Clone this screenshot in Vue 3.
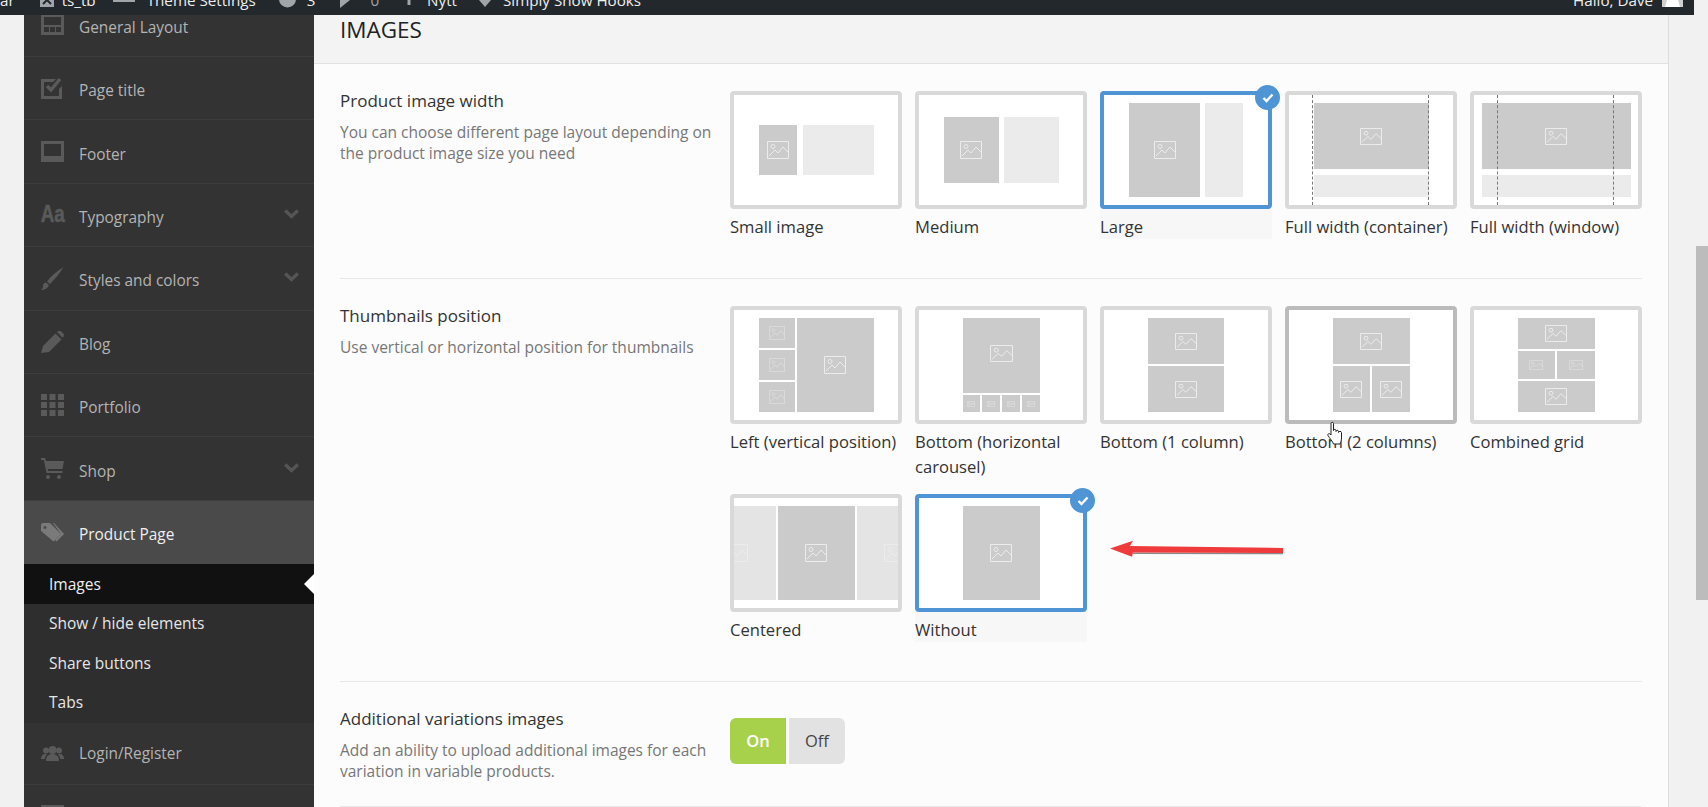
<template>
  <div class="page">
    <header class="adminbar">
      <span class="ab-text ab-first">ar</span>
      <svg class="ab-icon ab-site" width="14" height="14" viewBox="0 0 14 14"><path d="M0 0h14v14H0z" /><path d="M3 3l8 8M11 3l-8 8" stroke="#23282d" stroke-width="2" /></svg>
      <span class="ab-text ab-site-name">ts_tb</span>
      <svg class="ab-icon ab-theme" width="22" height="8" viewBox="0 0 22 8"><path d="M0 0h22v6H0z" /></svg>
      <span class="ab-text ab-theme-name">Theme Settings</span>
      <svg class="ab-icon ab-update" width="17" height="8" viewBox="0 0 17 8"><circle cx="8.5" cy="-1" r="8.5" /></svg>
      <span class="ab-text ab-count">3</span>
      <svg class="ab-icon ab-comment" width="10" height="8" viewBox="0 0 10 8"><path d="M0 0h10L0 8z" /></svg>
      <span class="ab-text ab-zero">0</span>
      <svg class="ab-icon ab-plus" width="8" height="8" viewBox="0 0 8 8"><path d="M2.5 0h3v5h-3z" /></svg>
      <span class="ab-text ab-new">Nytt</span>
      <svg class="ab-icon ab-hooks" width="12" height="8" viewBox="0 0 12 8"><path d="M0 0h12L6 7z" /></svg>
      <span class="ab-text ab-hooks-name">Simply Show Hooks</span>
      <span class="ab-text ab-hello">Hallo, Dave</span>
      <svg class="ab-avatar" width="21" height="7" viewBox="0 0 21 7"><path fill="#cfcfcf" d="M0 0h21v7H0z" /><path fill="#fff" d="M5 0h11l2 7H3z" /></svg>
    </header>

    <div class="layout">
      <nav class="sidebar">
        <div class="menu">
          <template v-for="item in menu" :key="item.icon">
            <div class="menu-item" :class="{ active: item.active, short: item.short }">
              <span class="menu-icon">
                <svg v-if="item.icon === 'layout'" width="23" height="21" viewBox="0 0 23 21"><path fill-rule="evenodd" d="M0 0h23v21H0zM3 3v8h17V3zM3 13v5h5v-5zM9 13v5h5v-5zM15 13v5h5v-5z" /></svg>
                <svg v-else-if="item.icon === 'title'" width="23" height="22" viewBox="0 0 23 22"><path d="M0 2h15l-3 3H3v14h15v-7l3-3v13H0z" /><path d="M6 9l4 4 9-11" fill="none" stroke="currentColor" stroke-width="3.4" /></svg>
                <svg v-else-if="item.icon === 'footer'" width="23" height="21" viewBox="0 0 23 21"><path fill-rule="evenodd" d="M0 0h23v21H0zM3 3v12h17V3z" /></svg>
                <span v-else-if="item.icon === 'type'" class="aa">Aa</span>
                <svg v-else-if="item.icon === 'brush'" width="23" height="23" viewBox="0 0 23 23"><path d="M22.5 0C19 6 14 12 9 17l-3-2.500C10 9 16 4 22.500 0z" /><path d="M5 15.500l3 2.500c-1 3-4 5-8 5 2-1 2-3 2-4 0-2 1.500-3.500 3-3.500z" /></svg>
                <svg v-else-if="item.icon === 'pencil'" width="23" height="22" viewBox="0 0 23 22"><path d="M0 22l2-7L14.500 2.500l6 6L8 21z" /><path d="M16 1l1-.7c1-.5 2-.5 3 0l2.500 2.500c.5 1 .5 2 0 3l-1 1z" /></svg>
                <svg v-else-if="item.icon === 'grid'" width="23" height="22" viewBox="0 0 23 22"><path d="M0 0h6v6H0zM8.500 0h6v6h-6zM17 0h6v6h-6zM0 8h6v6H0zM8.500 8h6v6h-6zM17 8h6v6h-6zM0 16h6v6H0zM8.500 16h6v6h-6zM17 16h6v6h-6z" /></svg>
                <svg v-else-if="item.icon === 'cart'" width="23" height="21" viewBox="0 0 23 21"><path d="M0 0h4l1 3h18l-1.500 8H6.800l.4 2h14.300v2H5.500L2.800 2H0z" /><circle cx="7" cy="19" r="2" /><circle cx="18" cy="19" r="2" /></svg>
                <svg v-else-if="item.icon === 'tags'" width="23" height="19" viewBox="0 0 23 19"><path fill-rule="evenodd" d="M0 2C0 1 1 0 2 0h7l11 11-7.500 7.500L0 8zM4 3a1.500 1.500 0 1 0 .01 0z" /><path d="M12 0h1l10 11-7.500 7.500-1.500-1.500 6-6z" /></svg>
                <svg v-else-if="item.icon === 'group'" width="23" height="15" viewBox="0 0 23 15"><circle cx="11.500" cy="4" r="4" /><path d="M5 15c0-5 2.500-7 6.500-7s6.500 2 6.500 7z" /><circle cx="5" cy="4.500" r="3" /><circle cx="18" cy="4.500" r="3" /><path d="M0 13c0-3 1.500-5 4.500-5 .8 0 1 .2 1.300.4C4.500 10 3.800 11.500 3.700 13zM23 13c0-3-1.500-5-4.500-5-.8 0-1 .2-1.300.4 1.300 1.600 2 3.100 2.100 4.600z" /></svg>
                <svg v-else width="23" height="21" viewBox="0 0 23 21"><path d="M0 0h23v21H0z" /></svg>
              </span>
              <span class="menu-label">{{ item.label }}</span>
              <svg v-if="item.arrow" class="chevron" width="15" height="10" viewBox="0 0 15 10"><path d="M1.200 1.500l6.300 6 6.300-6" fill="none" stroke="currentColor" stroke-width="3.400" /></svg>
            </div>
            <ul v-if="item.active" class="submenu">
              <li v-for="sub in submenu" :key="sub" :class="{ current: sub === 'Images' }">{{ sub }}</li>
            </ul>
          </template>
        </div>
      </nav>

      <main class="panel">
        <div class="panel-head">
          <h2>IMAGES</h2>
        </div>
        <section v-for="row in sections" :key="row.title" class="row">
          <div class="row-info">
            <h3>{{ row.title }}</h3>
            <p>{{ row.desc }}</p>
          </div>
          <div class="options">
            <div v-for="opt in row.options" :key="opt.label" class="option" :class="{ selected: opt.selected }">
              <div class="card" :class="{ hovered: opt.hovered }">
                <div class="thumb" :style="{ gridTemplateColumns: opt.cols, gridTemplateRows: opt.rows, gap: opt.gap || '2px' }">
                  <div
                    v-for="(cell, i) in opt.cells"
                    :key="i"
                    class="cell"
                    :class="{ light: cell.light, pale: cell.pale, up: cell.up }"
                    :style="{ gridArea: cell.area }"
                  >
                    <svg v-if="cell.pic" class="pic" :class="{ faint: cell.pic[0] < 20 }" :width="cell.pic[0]" :height="cell.pic[1]" viewBox="0 0 22 18" preserveAspectRatio="none">
                      <rect x="0.500" y="0.500" width="21" height="17" vector-effect="non-scaling-stroke" />
                      <circle cx="6" cy="5.500" r="2" vector-effect="non-scaling-stroke" />
                      <path d="M2 15l6-6 3 3 5-6 5 5" vector-effect="non-scaling-stroke" />
                    </svg>
                  </div>
                </div>
                <template v-if="opt.dashed">
                  <i class="dash dash-left"></i>
                  <i class="dash dash-right"></i>
                </template>
              </div>
              <span v-if="opt.selected" class="badge">
                <svg width="12" height="10" viewBox="0 0 12 10"><path d="M1.500 5l3 3 6-6.500" fill="none" stroke="#fff" stroke-width="2.400" /></svg>
              </span>
              <div class="option-label">{{ opt.label }}</div>
              <svg v-if="opt.hovered" class="hand" width="16" height="24" viewBox="0 0 16 24">
                <path d="M4 2.500C4 1 6.500 1 6.500 2.500v7c0-1.500 2.500-1.500 2.500 0v1c0-1.500 2.500-1.500 2.500 0v1c0-1.500 3-1.500 3 0V17c0 3-1 4-1.500 6H6.500C6 21 2.500 17 1 14.500.3 13 2 12 3.200 13l.8 1z" fill="#fff" stroke="#222" stroke-width="1" />
              </svg>
            </div>
            <svg v-if="row.arrow" class="arrow" width="176" height="22" viewBox="0 0 176 22">
              <path d="M24 14.500l150 .5v1.200L24 16z" fill="#8a8a8a" />
              <path d="M1 10.500L24 2.700 21 8l153 2v5L24 14.500l-1 4.200z" fill="#ef3b3b" />
            </svg>
          </div>
        </section>
        <section class="row row-toggle">
          <div class="row-info">
            <h3>Additional variations images</h3>
            <p>Add an ability to upload additional images for each variation in variable products.</p>
          </div>
          <div class="toggle">
            <span class="toggle-on">On</span>
            <span class="toggle-off">Off</span>
          </div>
        </section>
      </main>

      <div class="gutter"></div>
      <div class="scrollbar"><div class="scroll-thumb"></div></div>
    </div>
  </div>
</template>

<script setup>
const menu = [
  { label: 'General Layout', icon: 'layout' },
  { label: 'Page title', icon: 'title' },
  { label: 'Footer', icon: 'footer' },
  { label: 'Typography', icon: 'type', arrow: true },
  { label: 'Styles and colors', icon: 'brush', arrow: true },
  { label: 'Blog', icon: 'pencil' },
  { label: 'Portfolio', icon: 'grid' },
  { label: 'Shop', icon: 'cart', arrow: true },
  { label: 'Product Page', icon: 'tags', active: true },
  { label: 'Login/Register', icon: 'group', short: true },
  { label: '', icon: 'box' }
]

const submenu = ['Images', 'Show / hide elements', 'Share buttons', 'Tabs']

const big = [22, 18]
const mid = [22, 17]

const sections = [
  {
    title: 'Product image width',
    desc: 'You can choose different page layout depending on the product image size you need',
    options: [
      {
        label: 'Small image',
        cols: '38px 71px',
        rows: '50px',
        gap: '6px',
        cells: [{ area: '1/1', pic: big }, { area: '1/2', light: true }]
      },
      {
        label: 'Medium',
        cols: '55px 55px',
        rows: '66px',
        gap: '5px',
        cells: [{ area: '1/1', pic: big }, { area: '1/2', light: true }]
      },
      {
        label: 'Large',
        selected: true,
        cols: '71.500px 38px',
        rows: '94px',
        gap: '5px',
        cells: [{ area: '1/1', pic: big }, { area: '1/2', light: true }]
      },
      {
        label: 'Full width (container)',
        dashed: true,
        cols: '115px',
        rows: '66px 22px',
        gap: '6px',
        cells: [{ area: '1/1', pic: mid }, { area: '2/1', light: true }]
      },
      {
        label: 'Full width (window)',
        dashed: true,
        cols: '149px',
        rows: '66px 22px',
        gap: '6px',
        cells: [{ area: '1/1', pic: mid }, { area: '2/1', light: true }]
      }
    ]
  },
  {
    title: 'Thumbnails position',
    desc: 'Use vertical or horizontal position for thumbnails',
    arrow: true,
    options: [
      {
        label: 'Left (vertical position)',
        cols: '36px 77px',
        rows: '30px 30px 30px',
        cells: [
          { area: '1/1', pic: [16, 14] },
          { area: '2/1', pic: [16, 14] },
          { area: '3/1', pic: [16, 14] },
          { area: '1/2/4/3', pic: big }
        ]
      },
      {
        label: 'Bottom (horizontal carousel)',
        cols: '17.750px 17.750px 17.750px 17.750px',
        rows: '75px 17px',
        cells: [
          { area: '1/1/2/5', pic: [23, 17], up: true },
          { area: '2/1', pic: [8, 6] },
          { area: '2/2', pic: [8, 6] },
          { area: '2/3', pic: [8, 6] },
          { area: '2/4', pic: [8, 6] }
        ]
      },
      {
        label: 'Bottom (1 column)',
        cols: '76px',
        rows: '46px 46px',
        cells: [{ area: '1/1', pic: mid }, { area: '2/1', pic: mid }]
      },
      {
        label: 'Bottom (2 columns)',
        hovered: true,
        cols: '37.500px 37.500px',
        rows: '46px 46px',
        cells: [
          { area: '1/1/2/3', pic: mid },
          { area: '2/1', pic: mid },
          { area: '2/2', pic: mid }
        ]
      },
      {
        label: 'Combined grid',
        cols: '37.500px 37.500px',
        rows: '31px 28px 31px',
        cells: [
          { area: '1/1/2/3', pic: mid },
          { area: '2/1', pic: [14, 10] },
          { area: '2/2', pic: [14, 10] },
          { area: '3/1/4/3', pic: mid }
        ]
      },
      {
        label: 'Centered',
        cols: '77px 77px 77px',
        rows: '94px',
        cells: [
          { area: '1/1', pale: true, pic: big },
          { area: '1/2', pic: big },
          { area: '1/3', pale: true, pic: big }
        ]
      },
      {
        label: 'Without',
        selected: true,
        cols: '77px',
        rows: '94px',
        cells: [{ area: '1/1', pic: big }]
      }
    ]
  }
]
</script>

<style>
html,
body {
  margin: 0;
  height: 100%;
  overflow: hidden;
  background: #f1f1f1;
}
</style>

<style scoped>
.page {
  width: 1708px;
  height: 807px;
  overflow: hidden;
  font-family: "Open Sans", "Noto Sans", sans-serif;
  color: #333;
}

.adminbar {
  width: 1694px;
  height: 15px;
  background: #23282d;
  display: flex;
  align-items: flex-start;
  overflow: hidden;
  color: #eee;
}

.ab-text {
  font-size: 15.200px;
  line-height: 20px;
  margin-top: -10px;
  white-space: nowrap;
}

.ab-icon {
  fill: #a0a5aa;
  flex: none;
}

.ab-site { margin-left: 25px; margin-top: -7px; }
.ab-site-name { margin-left: 8px; }
.ab-theme { margin-left: 17px; margin-top: -4px; }
.ab-theme-name { margin-left: 12px; }
.ab-update { margin-left: 23px; }
.ab-count { margin-left: 11px; }
.ab-comment { margin-left: 25px; }
.ab-zero { margin-left: 20px; color: #a0a5aa; }
.ab-plus { margin-left: 26px; }
.ab-new { margin-left: 14px; }
.ab-hooks { margin-left: 22px; }
.ab-hooks-name { margin-left: 12px; }
.ab-hello { margin-left: auto; }
.ab-avatar { margin: 0 11px 0 9px; flex: none; }

.layout {
  display: flex;
  height: 792px;
  padding-left: 24px;
}

.sidebar {
  width: 290px;
  flex: none;
  background: #333;
  overflow: hidden;
}

.menu {
  margin-top: -21.400px;
}

.menu-item {
  position: relative;
  box-sizing: border-box;
  height: 63.400px;
  display: flex;
  align-items: center;
  padding-left: 17px;
  border-bottom: 1px solid #3d3d3d;
  color: #b4b4b4;
  font-size: 15.400px;
}

.menu-item.short {
  height: 62px;
}

.menu-item.active {
  background: #4a4a4a;
  border-bottom: 0;
  color: #efefef;
}

.menu-icon {
  width: 23px;
  height: 23px;
  display: flex;
  align-items: center;
  justify-content: center;
  margin-right: 15px;
  color: #5a5a5a;
  fill: #5a5a5a;
}

.active .menu-icon {
  color: #7a7a7a;
  fill: #7a7a7a;
}

.aa {
  font-family: "Liberation Sans", sans-serif;
  font-weight: 700;
  font-size: 23px;
  line-height: 23px;
  transform: scaleX(0.82);
  -webkit-text-stroke: 0.5px #5a5a5a;
}

.menu-label {
  padding-top: 5px;
}

.active .menu-label {
  padding-top: 4px;
}

.short .menu-label {
  padding-top: 1px;
}

.chevron {
  position: absolute;
  right: 15px;
  top: 50%;
  margin-top: -6px;
  color: #555;
}

.submenu {
  list-style: none;
  margin: 0;
  padding: 0;
  background: #2e2e2e;
}

.submenu li {
  height: 39.500px;
  line-height: 39.500px;
  padding-left: 25px;
  color: #e6e6e6;
  font-size: 15.500px;
  position: relative;
}

.submenu li.current {
  background: #111;
  height: 40px;
  line-height: 41px;
  color: #eee;
}

.submenu li.current::after {
  content: "";
  position: absolute;
  right: 0;
  top: 10px;
  border: 10px solid transparent;
  border-left: 0;
  border-right-color: #fff;
}

.panel {
  width: 1354px;
  flex: none;
  background: #fcfcfc;
  border-right: 1px solid #ddd;
}

.panel-head {
  box-sizing: border-box;
  height: 49px;
  background: #f3f3f3;
  border-bottom: 1px solid #e2e2e2;
  padding: 0 26px;
}

.panel-head h2 {
  margin: 0;
  font-size: 22.500px;
  font-weight: 500;
  line-height: 30px;
  color: #222;
}

.row {
  display: flex;
  margin: 0 26px;
  padding: 27px 0 39px;
  border-bottom: 1px solid #e8e8e8;
}

.row-info {
  width: 390px;
  flex: none;
  padding-top: 1px;
}

.row-info h3 {
  margin: 0;
  font-size: 17px;
  font-weight: 500;
  line-height: 18px;
  color: #333;
}

.row-info p {
  margin: 11.500px 0 0;
  width: 380px;
  font-size: 15.500px;
  line-height: 21px;
  color: #777;
}

.options {
  display: grid;
  grid-template-columns: repeat(5, 172px);
  column-gap: 13px;
  row-gap: 15px;
  align-items: start;
}

.option {
  position: relative;
}

.card {
  box-sizing: border-box;
  position: relative;
  width: 172px;
  height: 118px;
  border: 4px solid #d9d9d9;
  border-radius: 4px;
  background: #fff;
  overflow: hidden;
  display: grid;
  place-content: center;
}

.card.hovered {
  border-color: #bbb;
}

.selected .card {
  border-color: #4f94d4;
}

.thumb {
  display: grid;
  justify-content: center;
}

.cell {
  background: #cbcbcb;
  display: flex;
  align-items: center;
  justify-content: center;
  overflow: hidden;
}

.cell.light {
  background: #ebebeb;
}

.cell.pale {
  background: #e4e4e4;
}

.cell.up {
  padding-bottom: 4px;
}

.pic {
  flex: none;
  fill: none;
  stroke: #ececec;
  stroke-width: 1px;
}

.pic.faint {
  stroke: #dcdcdc;
}

.dash {
  position: absolute;
  top: 0;
  bottom: 0;
  border-left: 1px dashed #777;
}

.dash-left {
  left: 23px;
}

.dash-right {
  left: 139px;
}

.badge {
  position: absolute;
  top: -6px;
  right: -8px;
  width: 25px;
  height: 25px;
  border-radius: 50%;
  background: #4f94d4;
  display: flex;
  align-items: center;
  justify-content: center;
}

.option-label {
  padding-top: 5px;
  font-size: 16.600px;
  line-height: 25px;
  color: #333;
}

.selected .option-label {
  background: #f7f7f7;
}

.hand {
  position: absolute;
  left: 42px;
  top: 115px;
}

.arrow {
  grid-column: 3 / span 2;
  margin: 44px 0 0 9px;
}

.row-toggle {
  padding-bottom: 24px;
}

.toggle {
  margin-top: 9px;
  display: flex;
  gap: 3px;
  height: 46px;
  font-size: 16.500px;
  line-height: 46px;
  text-align: center;
}

.toggle span {
  width: 56px;
}

.toggle-on {
  background: #a8d14b;
  color: #fff;
  font-weight: 600;
  border-radius: 6px 0 0 6px;
}

.toggle-off {
  background: #e2e2e2;
  color: #444;
  font-weight: 500;
  border-radius: 0 6px 6px 0;
}

.gutter {
  width: 27px;
  flex: none;
}

.scrollbar {
  width: 12px;
  flex: none;
  padding-top: 231px;
}

.scroll-thumb {
  height: 354px;
  background: #bcbcbc;
}
</style>
